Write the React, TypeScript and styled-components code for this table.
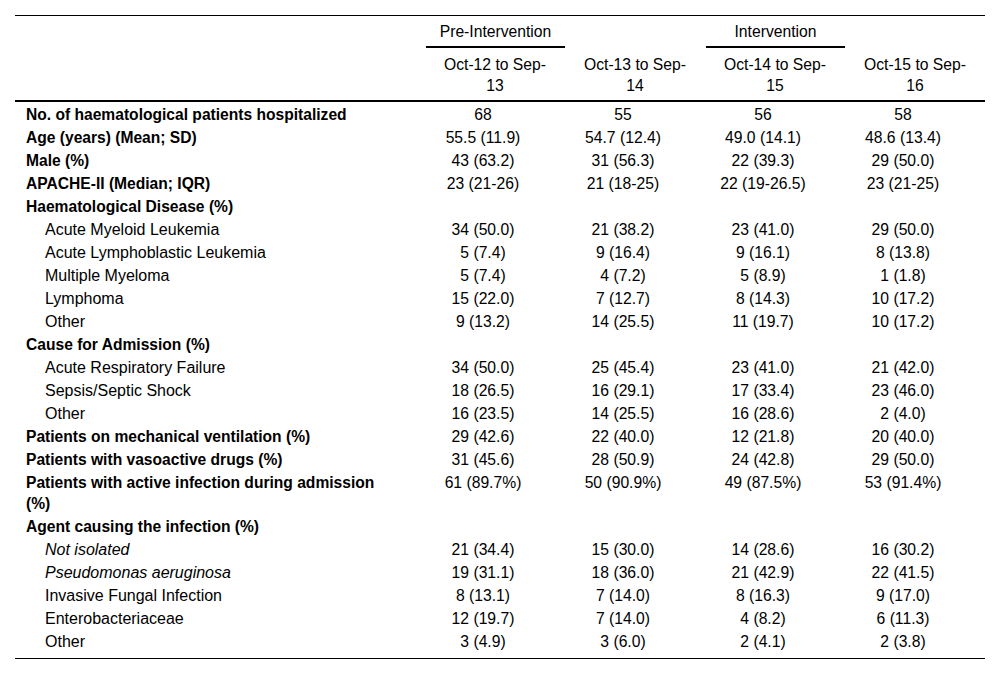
import React from 'react';
import styled, { createGlobalStyle } from 'styled-components';

type Row = {
  label: string;
  kind: 'head' | 'item' | 'italic';
  values?: string[];
};

const periods = [
  ['Oct-12 to Sep-', '13'],
  ['Oct-13 to Sep-', '14'],
  ['Oct-14 to Sep-', '15'],
  ['Oct-15 to Sep-', '16'],
];

const rows: Row[] = [
  { label: 'No. of haematological patients hospitalized', kind: 'head', values: ['68', '55', '56', '58'] },
  { label: 'Age (years) (Mean; SD)', kind: 'head', values: ['55.5 (11.9)', '54.7 (12.4)', '49.0 (14.1)', '48.6 (13.4)'] },
  { label: 'Male (%)', kind: 'head', values: ['43 (63.2)', '31 (56.3)', '22 (39.3)', '29 (50.0)'] },
  { label: 'APACHE-II (Median; IQR)', kind: 'head', values: ['23 (21-26)', '21 (18-25)', '22 (19-26.5)', '23 (21-25)'] },
  { label: 'Haematological Disease (%)', kind: 'head' },
  { label: 'Acute Myeloid Leukemia', kind: 'item', values: ['34 (50.0)', '21 (38.2)', '23 (41.0)', '29 (50.0)'] },
  { label: 'Acute Lymphoblastic Leukemia', kind: 'item', values: ['5 (7.4)', '9 (16.4)', '9 (16.1)', '8 (13.8)'] },
  { label: 'Multiple Myeloma', kind: 'item', values: ['5 (7.4)', '4 (7.2)', '5 (8.9)', '1 (1.8)'] },
  { label: 'Lymphoma', kind: 'item', values: ['15 (22.0)', '7 (12.7)', '8 (14.3)', '10 (17.2)'] },
  { label: 'Other', kind: 'item', values: ['9 (13.2)', '14 (25.5)', '11 (19.7)', '10 (17.2)'] },
  { label: 'Cause for Admission (%)', kind: 'head' },
  { label: 'Acute Respiratory Failure', kind: 'item', values: ['34 (50.0)', '25 (45.4)', '23 (41.0)', '21 (42.0)'] },
  { label: 'Sepsis/Septic Shock', kind: 'item', values: ['18 (26.5)', '16 (29.1)', '17 (33.4)', '23 (46.0)'] },
  { label: 'Other', kind: 'item', values: ['16 (23.5)', '14 (25.5)', '16 (28.6)', '2 (4.0)'] },
  { label: 'Patients on mechanical ventilation (%)', kind: 'head', values: ['29 (42.6)', '22 (40.0)', '12 (21.8)', '20 (40.0)'] },
  { label: 'Patients with vasoactive drugs (%)', kind: 'head', values: ['31 (45.6)', '28 (50.9)', '24 (42.8)', '29 (50.0)'] },
  { label: 'Patients with active infection during admission (%)', kind: 'head', values: ['61 (89.7%)', '50 (90.9%)', '49 (87.5%)', '53 (91.4%)'] },
  { label: 'Agent causing the infection (%)', kind: 'head' },
  { label: 'Not isolated', kind: 'italic', values: ['21 (34.4)', '15 (30.0)', '14 (28.6)', '16 (30.2)'] },
  { label: 'Pseudomonas aeruginosa', kind: 'italic', values: ['19 (31.1)', '18 (36.0)', '21 (42.9)', '22 (41.5)'] },
  { label: 'Invasive Fungal Infection', kind: 'item', values: ['8 (13.1)', '7 (14.0)', '8 (16.3)', '9 (17.0)'] },
  { label: 'Enterobacteriaceae', kind: 'item', values: ['12 (19.7)', '7 (14.0)', '4 (8.2)', '6 (11.3)'] },
  { label: 'Other', kind: 'item', values: ['3 (4.9)', '3 (6.0)', '2 (4.1)', '2 (3.8)'] },
];

const App = () => (
  <>
    <GlobalStyle />
    <StFrame>
      <StTable>
        <colgroup>
          <col style={{ width: 398 }} />
          <col style={{ width: 140 }} />
          <col style={{ width: 140 }} />
          <col style={{ width: 140 }} />
          <col style={{ width: 152 }} />
        </colgroup>
        <thead>
          <tr>
            <StGroupCell />
            <StGroupCell>
              <StGroupLabel>Pre-Intervention</StGroupLabel>
            </StGroupCell>
            <StGroupCell />
            <StGroupCell>
              <StGroupLabel>Intervention</StGroupLabel>
            </StGroupCell>
            <StGroupCell />
          </tr>
          <tr>
            <StPeriodCell />
            {periods.map(([top, bottom]) => (
              <StPeriodCell key={top + bottom}>
                {top}
                <br />
                {bottom}
              </StPeriodCell>
            ))}
          </tr>
        </thead>
        <tbody>
          {rows.map((row, i) => (
            <tr key={i}>
              <StLabel $kind={row.kind}>{row.label}</StLabel>
              {[0, 1, 2, 3].map((c) => (
                <StValue key={c}>{row.values ? row.values[c] : ''}</StValue>
              ))}
            </tr>
          ))}
        </tbody>
      </StTable>
    </StFrame>
  </>
);

export default App;

const GlobalStyle = createGlobalStyle`
  html, body {
    margin: 0;
    padding: 0;
    background: #ffffff;
  }
  body {
    font-family: "Liberation Sans", Arial, sans-serif;
    font-size: 15.7px;
    color: #000000;
  }
`;

const StFrame = styled.div`
  width: 970px;
  margin: 15px 15px 0;
  border-top: 1px solid #000;
  border-bottom: 1px solid #000;
`;

const StTable = styled.table`
  width: 100%;
  table-layout: fixed;
  border-collapse: separate;
  border-spacing: 0;
  font-size: 15.7px;
  line-height: 21px;

  & tbody tr:last-child td {
    padding-bottom: 6px;
  }
`;

const StGroupCell = styled.th`
  padding: 5px 0 0;
  font-weight: normal;
  vertical-align: bottom;
`;

const StGroupLabel = styled.div`
  margin: 0 -12px 0 13px;
  padding-bottom: 4px;
  border-bottom: 2px solid #000;
  text-align: center;
`;

const StPeriodCell = styled.th`
  padding: 6px 0 4px 24px;
  font-weight: normal;
  text-align: center;
  vertical-align: top;
  border-bottom: 2px solid #000;

  &:last-child {
    padding-right: 12px;
  }
`;

const StLabel = styled.td<{ $kind: Row['kind'] }>`
  padding: 2px 20px 0 ${({ $kind }) => ($kind === 'head' ? '11px' : '30px')};
  font-size: ${({ $kind }) => ($kind === 'head' ? '15.6px' : '16px')};
  font-weight: ${({ $kind }) => ($kind === 'head' ? 'bold' : 'normal')};
  font-style: ${({ $kind }) => ($kind === 'italic' ? 'italic' : 'normal')};
  text-align: left;
  vertical-align: top;
`;

const StValue = styled.td`
  padding: 2px 0 0;
  text-align: center;
  vertical-align: top;

  &:last-child {
    padding-right: 12px;
  }
`;
